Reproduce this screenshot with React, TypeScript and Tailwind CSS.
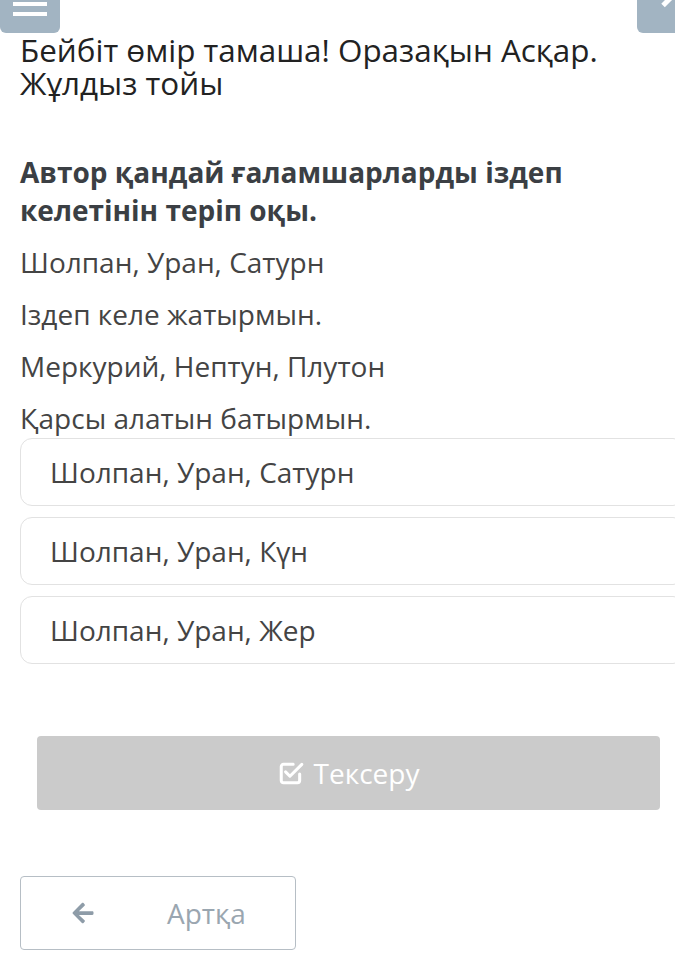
import { FaArrowLeft } from "react-icons/fa"

const options = ["Шолпан, Уран, Сатурн", "Шолпан, Уран, Күн", "Шолпан, Уран, Жер"]

const lines = [
  "Шолпан, Уран, Сатурн",
  "Іздеп келе жатырмын.",
  "Меркурий, Нептун, Плутон",
  "Қарсы алатын батырмын.",
]

export default function App() {
  return (
    <div className="relative min-h-[959px] w-[675px] overflow-hidden bg-white font-['Open_Sans',sans-serif] text-[#444]">
      {/* top buttons */}
      <div className="absolute left-0 top-[-10px] flex h-[43px] w-[60px] flex-col items-center justify-center gap-[6px] rounded-md bg-[#a2b4c2]">
        <span className="mt-[-6px] block h-[4px] w-[34px] bg-white" />
        <span className="block h-[4px] w-[34px] bg-white" />
      </div>
      <div className="absolute right-[-20px] top-[-10px] h-[43px] w-[58px] rounded-md bg-[#a2b4c2]">
        <span className="absolute left-[24px] top-[8px] block h-[5px] w-[14px] -rotate-45 bg-white" />
      </div>

      <div className="px-5 pt-[33px]">
        <h1 className="text-[31.4px] leading-[33px] text-[#222]">
          Бейбіт өмір тамаша! Оразақын Асқар.
          <br />
          Жұлдыз тойы
        </h1>

        <p className="mt-[54px] text-[28px] font-bold leading-[38px] text-[#3b3f44]">
          Автор қандай ғаламшарларды іздеп келетінін теріп оқы.
        </p>

        <div className="mt-[7px] flex flex-col">
          {lines.map((l) => (
            <p key={l} className="text-[28px] leading-[52px] text-[#444]">
              {l}
            </p>
          ))}
        </div>

        <div className="mr-[-30px] mt-[-6px] flex flex-col gap-[11px]">
          {options.map((o) => (
            <div
              key={o}
              className="flex h-[68px] items-center rounded-xl border border-[#e2e2e2] pl-[29px] text-[28px] text-[#444]"
            >
              {o}
            </div>
          ))}
        </div>

        <div className="ml-[17px] mr-[-5px] mt-[72px] flex h-[74px] items-center justify-center gap-[10px] rounded-[4px] bg-[#cbcbcb] text-[28px] text-white">
          <svg width="26" height="26" viewBox="0 0 24 24" fill="none" stroke="white" strokeWidth="2.8" strokeLinecap="round" strokeLinejoin="round">
            <path d="M20 13v6a2 2 0 0 1-2 2H5a2 2 0 0 1-2-2V6a2 2 0 0 1 2-2h9" />
            <path d="M7 11l4 4L22 4" />
          </svg>
          <span>Тексеру</span>
        </div>

        <div className="mt-[66px] flex h-[74px] w-[276px] items-center rounded-[4px] border border-[#b6bec5] text-[28px] text-[#9aa6b0]">
          <FaArrowLeft className="ml-[50px] h-[24px] w-[24px] text-[#8e9ca8]" />
          <span className="ml-[72px]">Артқа</span>
        </div>
      </div>
    </div>
  )
}
